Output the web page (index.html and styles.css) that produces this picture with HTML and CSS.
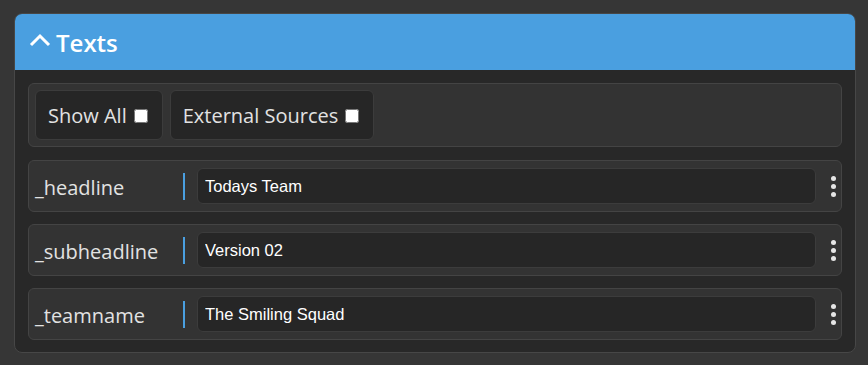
FILE: index.html
```html
<!DOCTYPE html>
<html lang="en">
<head>
  <meta charset="UTF-8">
  <title>Texts</title>
  <link rel="stylesheet" href="styles.css">
</head>
<body>

  <div class="panel">
    <div class="panel-head">
      <svg class="chevron" width="22" height="14" viewBox="0 0 22 14">
        <polyline points="2,12 11,3 20,12" fill="none" stroke="#fff" stroke-width="3"/>
      </svg>
      <span>Texts</span>
    </div>

    <div class="panel-body">
      <div class="toolbar">
        <label class="toggle">Show All <input type="checkbox"></label>
        <label class="toggle">External Sources <input type="checkbox"></label>
      </div>

      <div class="field">
        <span class="field-name">_headline</span>
        <span class="divider"></span>
        <input class="field-input" type="text" value="Todays Team">
        <span class="kebab"><i></i><i></i><i></i></span>
      </div>

      <div class="field">
        <span class="field-name">_subheadline</span>
        <span class="divider"></span>
        <input class="field-input" type="text" value="Version 02">
        <span class="kebab"><i></i><i></i><i></i></span>
      </div>

      <div class="field">
        <span class="field-name">_teamname</span>
        <span class="divider"></span>
        <input class="field-input" type="text" value="The Smiling Squad">
        <span class="kebab"><i></i><i></i><i></i></span>
      </div>
    </div>
  </div>

</body>
</html>
```

FILE: styles.css
```css
body {
  background-color: #363636;
  margin: 0;
  padding: 13px 12px 0 14px;
  font-family: 'Open Sans', sans-serif;
  color: #e2e2e2;
}

.panel {
  background-color: #282828;
  border: 1px solid #474747;
  border-radius: 8px;
  overflow: hidden;
}

.panel-head {
  background-color: #4a9fe0;
  height: 56px;
  display: flex;
  align-items: center;
  padding-left: 14px;
  color: #fff;
  font-weight: 600;
  font-size: 24px;
}

.chevron {
  margin-right: 5px;
  margin-top: -4px;
}

.panel-body {
  padding: 13px 13px 12px 13px;
  display: flex;
  flex-direction: column;
  gap: 12px;
}

.toolbar {
  background-color: #333;
  border: 1px solid #444;
  border-radius: 6px;
  padding: 6px;
  margin-bottom: 1px;
  display: flex;
  gap: 7px;
}

.toggle {
  background-color: #262626;
  border: 1px solid #3c3c3c;
  border-radius: 6px;
  height: 48px;
  padding: 0 14px 0 12px;
  display: flex;
  align-items: center;
  font-size: 20px;
}

.toggle input {
  width: 14px;
  height: 14px;
  margin: 2px 0 0 7px;
}

.field {
  background-color: #333;
  border: 1px solid #444;
  border-radius: 6px;
  height: 50px;
  padding: 0 1px 0 6px;
  display: flex;
  align-items: center;
}

.field-name {
  flex: 0 0 148px;
  font-size: 20px;
  margin-top: 2px;
}

.divider {
  width: 2px;
  height: 27px;
  background-color: #4a9fe0;
  margin-right: 12px;
}

.field-input {
  flex: 1;
  height: 36px;
  box-sizing: border-box;
  background-color: #262626;
  border: 1px solid #3c3c3c;
  border-radius: 6px;
  color: #fff;
  font-family: 'Liberation Sans', Arial, sans-serif;
  font-size: 16.5px;
  padding: 0 7px;
  margin-right: 10px;
  outline: none;
}

.kebab {
  width: 14px;
  display: flex;
  flex-direction: column;
  align-items: center;
  gap: 3px;
}

.kebab i {
  width: 5px;
  height: 5px;
  border-radius: 50%;
  background-color: #e6e6e6;
}
```
